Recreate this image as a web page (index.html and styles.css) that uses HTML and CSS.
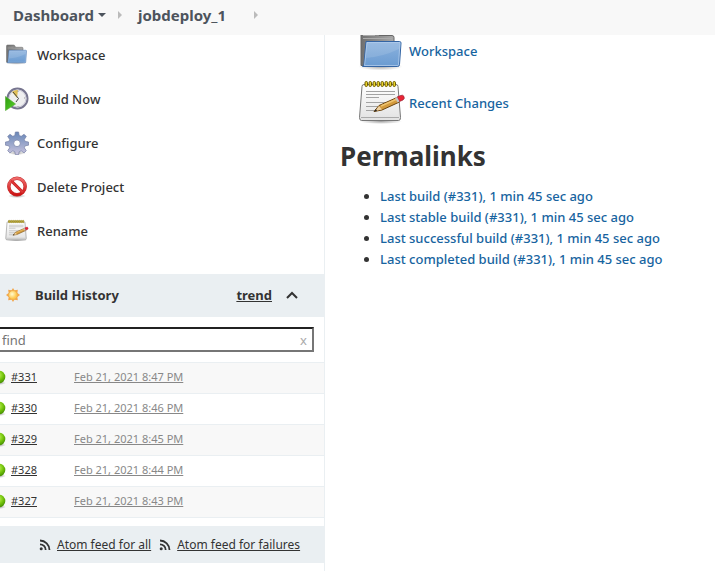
FILE: index.html
```html
<!DOCTYPE html>
<html lang="en">
<head>
<meta charset="utf-8">
<meta name="viewport" content="width=device-width, initial-scale=1">
<title>jobdeploy_1</title>
<link rel="stylesheet" href="styles.css">
</head>
<body>
<svg class="defs" aria-hidden="true">
  <defs>
    <linearGradient id="blue" x1="0" y1="0" x2="0" y2="1"><stop offset="0" stop-color="#8db3de"/><stop offset="1" stop-color="#6a9bd1"/></linearGradient>
    <linearGradient id="grey" x1="0" y1="0" x2="1" y2="0"><stop offset="0" stop-color="#707070"/><stop offset="1" stop-color="#a8a8a8"/></linearGradient>
    <linearGradient id="paper" x1="0" y1="0" x2="0" y2="1"><stop offset="0" stop-color="#fff"/><stop offset="1" stop-color="#e2e2e2"/></linearGradient>
    <linearGradient id="gear" x1="0" y1="0" x2="0" y2="1"><stop offset="0" stop-color="#6787b8"/><stop offset="1" stop-color="#c9c3dd"/></linearGradient>
    <linearGradient id="red" x1="0" y1="0" x2="0" y2="1"><stop offset="0" stop-color="#f06a6a"/><stop offset="1" stop-color="#cc1414"/></linearGradient>
    <linearGradient id="play" x1="0" y1="0" x2="1" y2="1"><stop offset="0" stop-color="#2f9c10"/><stop offset="1" stop-color="#58d22c"/></linearGradient>
    <radialGradient id="sun" cx=".4" cy=".4"><stop offset="0" stop-color="#fffbd0"/><stop offset="1" stop-color="#ffc94f"/></radialGradient>
    <radialGradient id="ball" cx=".45" cy=".35" r=".7"><stop offset="0" stop-color="#c5f65a"/><stop offset=".55" stop-color="#74c40c"/><stop offset="1" stop-color="#3e8600"/></radialGradient>
    <radialGradient id="shade"><stop offset="0" stop-color="#000" stop-opacity=".35"/><stop offset="1" stop-color="#000" stop-opacity="0"/></radialGradient>
    <symbol id="folder" viewBox="0 0 48 48">
      <ellipse cx="22.500" cy="39.500" rx="22" ry="4" fill="url(#shade)"/>
      <path d="M3 38.500V6q0-2 2-2h12q2 0 3 2l1 2.500h13q2 0 2 2v28z" fill="url(#grey)" stroke="#666"/>
      <path d="M5 8.500h12M5 11.500h29" stroke="#aaa"/>
      <path d="M8 14.500h33.500q1.500 0 1.500 1.500l-1.500 21.500q0 2-2 2H4.500q1.500-1 1.500-3z" fill="url(#blue)" stroke="#3465a4"/>
      <path d="M9 15.500h33l-1.500 22q0 1-1 1H6.500z" fill="none" stroke="#b9d2ee" stroke-opacity=".7"/>
      <path d="M8 31q16-1 33-9l.5-6H9z" fill="#fff" opacity=".12"/>
    </symbol>
    <symbol id="notepad" viewBox="0 0 48 48">
      <ellipse cx="23" cy="42.500" rx="21" ry="2.500" fill="url(#shade)"/>
      <path d="M6 5.500h32q2 0 2 2l2.500 31q.2 3-2 3h-37q-2 0-2-3L4 7.500q0-2 2-2z" fill="url(#paper)" stroke="#777"/>
      <path d="M3 38.500h38" stroke="#aaa"/>
      <path d="M8 12.500h29M8 15.500h29M8 18.500h13M8 23.500h22M8 27.500h16M8 31.500h8" stroke="#a2a2a2"/>
      <g fill="#e9d32b" stroke="#6d5b00"><rect x="7" y="2.500" width="2.500" height="5" rx="1.200"/><rect x="11" y="2.500" width="2.500" height="5" rx="1.200"/><rect x="15" y="2.500" width="2.500" height="5" rx="1.200"/><rect x="19" y="2.500" width="2.500" height="5" rx="1.200"/><rect x="23" y="2.500" width="2.500" height="5" rx="1.200"/><rect x="27" y="2.500" width="2.500" height="5" rx="1.200"/><rect x="31" y="2.500" width="2.500" height="5" rx="1.200"/><rect x="35" y="2.500" width="2.500" height="5" rx="1.200"/></g>
      <path d="M16 32.500l5-6L39 18.500l2.500 4.500L24 31z" fill="#d39a3d" stroke="#6b4410"/>
      <path d="M21 27l3 3.500-7 1.500z" fill="#edd0a0"/>
      <path d="M16 32.500l2-2.500 1 2z" fill="#222"/>
      <path d="M23 27l16-7" stroke="#efc46f" stroke-width="1.500"/>
      <path d="M39 18l3.500-1.500q2.500-1 3.500 1t-1 3.500L41.500 22.500z" fill="#e82435" stroke="#982030" stroke-width=".7"/>
      <path d="M37 19l2-1 2.500 4.500-2 1z" fill="#c5c5c5"/>
    </symbol>
    <symbol id="clock" viewBox="0 0 24 24">
      <circle cx="12.500" cy="11.500" r="10" fill="#efeff0" stroke="#77758f" stroke-width="2"/>
      <circle cx="12.500" cy="11.500" r="8.500" fill="none" stroke="#c7c6d4"/>
      <path d="M12 11L7 5q3-2.500 6-2z" fill="#e2bf55"/>
      <path d="M8 5l5.500 6.500L11 15" fill="none" stroke="#444" stroke-width="1"/>
      <path d="M13 4v1M19 11h1M13 19v1" stroke="#999"/>
      <path d="M.5 9.500l10 7.500-10 6.500z" fill="url(#play)" stroke="#5aae3c" stroke-width=".7"/>
    </symbol>
    <symbol id="cog" viewBox="0 0 24 24">
      <ellipse cx="12" cy="22" rx="9" ry="2" fill="url(#shade)"/>
      <path fill-rule="evenodd" fill="url(#gear)" stroke="#7580a5" stroke-width=".7" d="M10.400 1h3.200l.6 3.500 2 .8 2.900-2 2.200 2.200-2 2.900.8 2 3.400.6v3.200l-3.400.6-.8 2 2 2.900-2.200 2.200-2.900-2-2 .8-.6 3h-3.200l-.6-3-2-.8-2.900 2-2.200-2.200 2-2.900-.8-2-3.400-.6V11l3.400-.6.8-2-2-2.900 2.200-2.200 2.900 2 2-.8zM12 9a3.300 3.300 0 1 0 0 6.600A3.300 3.300 0 0 0 12 9z"/>
    </symbol>
    <symbol id="stop" viewBox="0 0 24 24">
      <ellipse cx="12" cy="21" rx="9" ry="2" fill="url(#shade)"/>
      <circle cx="12" cy="11.500" r="8.200" fill="#fff" stroke="#c03030" stroke-width="3.400"/>
      <path d="M6 5.500l12 12" stroke="#c62020" stroke-width="3"/>
      <circle cx="12" cy="11.500" r="8.200" fill="none" stroke="url(#red)" stroke-width="2.600"/>
      <path d="M6 5.500l12 12" stroke="#dc3535" stroke-width="2"/>
    </symbol>
    <symbol id="rss" viewBox="0 0 12 12">
      <circle cx="2.200" cy="9.800" r="1.500" fill="#333"/>
      <path d="M1 5.300a5.700 5.700 0 0 1 5.700 5.700M1 1.500A9.500 9.500 0 0 1 10.500 11" fill="none" stroke="#333" stroke-width="1.800"/>
    </symbol>
    <symbol id="success" viewBox="0 0 6 16">
      <ellipse cx="-1" cy="14" rx="7" ry="2" fill="url(#shade)"/>
      <circle cx="-1" cy="8" r="6.300" fill="url(#ball)"/>
    </symbol>
  </defs>
</svg>

<header class="breadcrumbs">
  <a class="crumb" href="#">Dashboard</a>
  <svg class="caret" viewBox="0 0 8 4"><path d="M0 0h8L4 4z" fill="#4d545d"/></svg>
  <svg class="sep" viewBox="0 0 4 8"><path d="M0 0l4 4-4 4z" fill="#bbb"/></svg>
  <a class="crumb job" href="#">jobdeploy_1</a>
  <svg class="sep last" viewBox="0 0 4 8"><path d="M0 0l4 4-4 4z" fill="#bbb"/></svg>
</header>

<div class="page">
  <aside class="sidebar">
    <nav class="tasks">
      <a href="#"><svg><use href="#folder"/></svg>Workspace</a>
      <a href="#"><svg><use href="#clock"/></svg>Build Now</a>
      <a href="#"><svg><use href="#cog"/></svg>Configure</a>
      <a href="#"><svg><use href="#stop"/></svg>Delete Project</a>
      <a href="#"><svg><use href="#notepad"/></svg>Rename</a>
    </nav>

    <section class="history">
      <div class="history-head">
        <svg class="sun" viewBox="0 0 16 16"><path d="M8 0l1.600 2.500L13.500 2 13 5.800 16 8l-3 2.200.5 3.800-3.900-.5L8 16l-1.600-2.500-3.900.5.500-3.800L0 8l3-2.200L2.500 2l3.900.5z" fill="#f3a64b"/><circle cx="8" cy="8" r="5" fill="url(#sun)" stroke="#eeb04c" stroke-width=".8"/></svg>
        <h2>Build History</h2>
        <a href="#">trend</a>
        <button type="button" aria-label="Collapse"><svg viewBox="0 0 12 8"><path d="M1 7l5-5 5 5" fill="none" stroke="#333" stroke-width="2"/></svg></button>
      </div>
      <div class="search">
        <input type="text" placeholder="find" aria-label="find">
        <button type="button">x</button>
      </div>
      <table class="builds">
        <tr><td><div class="build"><svg><use href="#success"/></svg><a href="#">#331</a></div></td><td><a href="#">Feb 21, 2021 8:47 PM</a></td></tr>
        <tr><td><div class="build"><svg><use href="#success"/></svg><a href="#">#330</a></div></td><td><a href="#">Feb 21, 2021 8:46 PM</a></td></tr>
        <tr><td><div class="build"><svg><use href="#success"/></svg><a href="#">#329</a></div></td><td><a href="#">Feb 21, 2021 8:45 PM</a></td></tr>
        <tr><td><div class="build"><svg><use href="#success"/></svg><a href="#">#328</a></div></td><td><a href="#">Feb 21, 2021 8:44 PM</a></td></tr>
        <tr><td><div class="build"><svg><use href="#success"/></svg><a href="#">#327</a></div></td><td><a href="#">Feb 21, 2021 8:43 PM</a></td></tr>
      </table>
      <div class="feeds">
        <svg><use href="#rss"/></svg><a href="#">Atom feed for all</a>
        <svg><use href="#rss"/></svg><a href="#">Atom feed for failures</a>
      </div>
    </section>
  </aside>

  <main class="content">
    <div class="shortcuts">
      <a href="#"><svg><use href="#folder"/></svg>Workspace</a>
      <a href="#"><svg><use href="#notepad"/></svg>Recent Changes</a>
    </div>
    <h1>Permalinks</h1>
    <ul>
      <li><a href="#">Last build (#331), 1 min 45 sec ago</a></li>
      <li><a href="#">Last stable build (#331), 1 min 45 sec ago</a></li>
      <li><a href="#">Last successful build (#331), 1 min 45 sec ago</a></li>
      <li><a href="#">Last completed build (#331), 1 min 45 sec ago</a></li>
    </ul>
  </main>
</div>
</body>
</html>
```
FILE: styles.css
```css
* { box-sizing: border-box; }

body {
  margin: 0;
  min-height: 100vh;
  display: flex;
  flex-direction: column;
  background: #fff;
  color: #333;
  font: 500 13px/20px "Noto Sans", "Open Sans", sans-serif;
}

a { color: inherit; }
svg { display: block; flex: none; }
button { border: 0; padding: 0; background: none; font: inherit; }
.defs { position: absolute; width: 0; height: 0; }

.breadcrumbs {
  display: flex;
  align-items: center;
  height: 35px;
  padding: 0 13px 5px;
  background: #f8f8f8;
  color: #4d545d;
}
.crumb { font-size: 15px; font-weight: 700; text-decoration: none; }
.caret { width: 8px; height: 4px; margin-left: 4px; }
.sep { width: 4px; height: 8px; margin: 0 16px 0 12px; }
.sep.last { margin-left: 28px; }

.page { flex: 1; display: flex; }

.sidebar {
  flex: 0 0 325px;
  overflow: hidden;
  border-right: 1px solid #eaeff2;
}
.tasks {
  display: flex;
  flex-direction: column;
  gap: 20px;
  padding: 8px 5px 31px;
}
.tasks a {
  display: flex;
  align-items: center;
  gap: 8px;
  height: 24px;
  text-decoration: none;
}
.tasks svg { width: 24px; height: 24px; }

.history-head {
  display: flex;
  align-items: center;
  height: 43px;
  padding: 0 26px 2px 6px;
  background: #eaeff2;
  font-weight: 700;
}
.sun { width: 14px; height: 14px; margin-right: 15px; }
.history-head h2 { flex: 1; margin: 0; font-size: 13px; }
.history-head button { margin-left: 14px; }
.history-head button svg { width: 12px; height: 8px; }

.search {
  display: flex;
  align-items: center;
  margin: 10px 10px 10px -2px;
}
.search input {
  width: 100%;
  height: 25px;
  padding: 0 20px 0 2px;
  border: 2px inset #767676;
  font: 13px "Noto Sans", "Open Sans", sans-serif;
}
.search input::placeholder { color: #757575; }
.search button { width: 14px; margin-left: -14px; color: #aaa; font-size: 13px; font-weight: 400; text-align: left; }

.builds {
  width: 100%;
  border-collapse: collapse;
  table-layout: fixed;
  font-size: 11px;
  font-weight: 400;
}
.builds tr { height: 31px; border-top: 1px solid #eaeff2; }
.builds tr:last-child { border-bottom: 1px solid #eaeff2; }
.builds tr:nth-child(odd) { background: #f8f8f8; }
.builds td { padding: 0 0 2px; }
.builds td:first-child { width: 74px; }
.builds td:last-child { color: #888; }
.build { display: flex; align-items: center; gap: 5px; }
.build svg { width: 6px; height: 16px; }

.feeds {
  display: flex;
  align-items: center;
  height: 37px;
  margin-top: 8px;
  padding-left: 39px;
  background: #eaeff2;
  font-size: 12px;
  font-weight: 400;
  white-space: nowrap;
}
.feeds svg { width: 12px; height: 12px; margin-right: 6px; }
.feeds a + svg { margin-left: 8px; }

.content { flex: 1; min-width: 0; overflow: hidden; padding: 0 15px; }
.content a { color: #1764a0; text-decoration: none; }
.shortcuts {
  display: flex;
  flex-direction: column;
  gap: 4px;
  margin: -8px 0 0 18px;
}
.shortcuts a { display: flex; align-items: center; gap: 3px; height: 48px; }
.shortcuts svg { width: 48px; height: 48px; }
h1 { margin: 11px 0 12px; font-size: 26px; line-height: 36px; }
ul { margin: 0; padding-left: 40px; line-height: 21px; }
```
